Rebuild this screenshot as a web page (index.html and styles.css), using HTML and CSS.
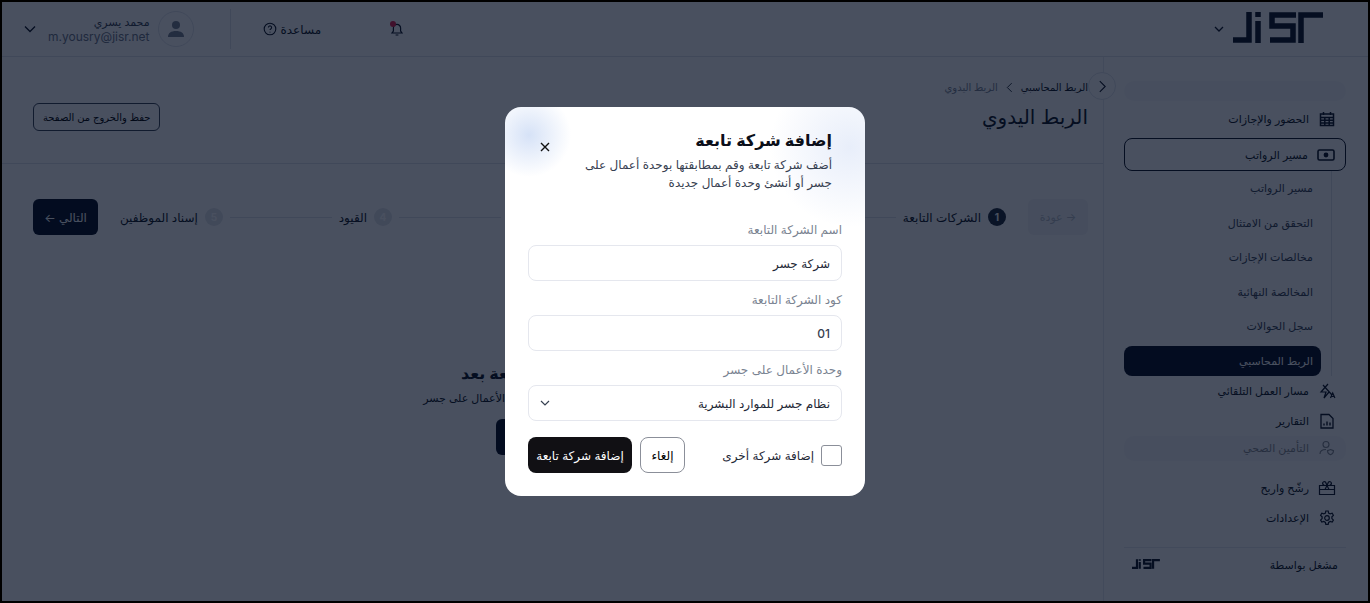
FILE: index.html
```html
<!DOCTYPE html>
<html lang="ar" dir="rtl">
<head>
  <meta charset="UTF-8">
  <title>الربط اليدوي</title>
  <link rel="stylesheet" href="styles.css">
</head>
<body>
  <div class="page">
    <!-- Top bar -->
    <header class="topbar">
      <div class="brand">
        <svg class="logo" viewBox="0 0 100 34" width="100" height="34"><path d="M0 28h16V0M25 9v22M25 0v5" fill="none" stroke="#0b1220" stroke-width="5.5"/><path d="M63 3H39v11h21v14H37M68 31V3h22" fill="none" stroke="#0b1220" stroke-width="5.5"/></svg>
        <svg class="chev" viewBox="0 0 12 12" width="12" height="12"><path d="M2 4l4 4 4-4" fill="none" stroke="#0b1220" stroke-width="1.3"/></svg>
      </div>
      <div class="top-actions">
        <span class="bell"><svg viewBox="0 0 16 16" width="16" height="16"><path d="M3 12h10l-1.4-2V7a3.6 3.6 0 0 0-7.2 0v3zM6.6 14h2.8" fill="none" stroke="#0b1220" stroke-width="1.2"/></svg><i class="bell-dot"></i></span>
        <span class="help">مساعدة <svg viewBox="0 0 14 14" width="14" height="14"><circle cx="7" cy="7" r="5.8" fill="none" stroke="#0b1220" stroke-width="1.1"/><path d="M5.4 5.5a1.6 1.6 0 1 1 2.4 1.4c-.5.3-.8.6-.8 1.2M7 9.8v.6" fill="none" stroke="#0b1220" stroke-width="1.1"/></svg></span>
        <span class="top-sep"></span>
        <div class="user">
          <span class="avatar"><svg viewBox="0 0 20 20" width="20" height="20"><circle cx="10" cy="6" r="4" fill="#77808f"/><path d="M2 18c0-4 3-6 8-6s8 2 8 6z" fill="#77808f"/></svg></span>
          <div class="user-text"><div class="user-name">محمد يسري</div><div class="user-mail">m.yousry@jisr.net</div></div>
          <svg class="user-chev" viewBox="0 0 12 12" width="12" height="12"><path d="M1 3.5l5 5 5-5" fill="none" stroke="#0b1220" stroke-width="1.3"/></svg>
        </div>
      </div>
    </header>

    <div class="layout">
      <!-- Side menu -->
      <aside class="sidebar">
        <div class="nav-faded nav-faded-top"></div>
        <a class="nav-item"><svg viewBox="0 0 16 16" width="16" height="16"><path d="M1.5 3h13v11.5h-13zM1.5 6.5h13M1.5 9.3h13M1.5 12h13M5.8 6.5v8M10.2 6.5v8M4.5 1v3M11.5 1v3" fill="none" stroke="#0b1220" stroke-width="1.5"/></svg>الحضور والإجازات</a>
        <a class="nav-item nav-open"><svg viewBox="0 0 18 14" width="18" height="14"><rect x="1" y="2" width="16" height="10" rx="1.5" fill="none" stroke="#0b1220" stroke-width="1.6"/><circle cx="9" cy="7" r="2.4" fill="#0b1220"/></svg>مسير الرواتب</a>
        <div class="subnav">
          <a class="sub-item">مسير الرواتب</a>
          <a class="sub-item">التحقق من الامتثال</a>
          <a class="sub-item">مخالصات الإجازات</a>
          <a class="sub-item">المخالصة النهائية</a>
          <a class="sub-item">سجل الحوالات</a>
          <a class="sub-item sub-active">الربط المحاسبي</a>
        </div>
        <a class="nav-item"><svg viewBox="0 0 18 16" width="18" height="16"><path d="M10 1L3 9h5l-2 6 5-6M5 2l9 10" fill="none" stroke="#0b1220" stroke-width="1.2"/><path d="M12.5 15l2.2-5 2.2 5M13.3 13.5h2.8" fill="none" stroke="#0b1220" stroke-width="1.2"/></svg>مسار العمل التلقائي</a>
        <a class="nav-item"><svg viewBox="0 0 14 16" width="14" height="16"><path d="M1 1.5h8l4 4v9.5H1z" fill="none" stroke="#0b1220" stroke-width="1.3"/><path d="M4 12.5v-2M7 12.5v-4M10 12.5v-3" stroke="#0b1220" stroke-width="1.4"/></svg>التقارير</a>
        <a class="nav-item nav-faded"><svg viewBox="0 0 16 16" width="16" height="16"><circle cx="7" cy="4.5" r="3" fill="none" stroke="#0b1220" stroke-width="1.1"/><path d="M1 14c0-3 2.500-4.500 6-4.500M11.500 9.500l3 1.200c0 2-1 3.300-3 4-2-.7-3-2-3-4z" fill="none" stroke="#0b1220" stroke-width="1.100"/></svg>التأمين الصحي</a>
        <a class="nav-item nav-gift"><svg viewBox="0 0 18 16" width="18" height="16"><path d="M1.500 5.500h15v9h-15zM1.500 9.500h15M6.500 5.500C3 4 5 .5 7.500 2L9 5.500 10.500 2C13 .5 15 4 11.500 5.500M9 5.500l-2 4M9 5.500l2 4" fill="none" stroke="#0b1220" stroke-width="1.200"/></svg>رشّح واربح</a>
        <a class="nav-item"><svg viewBox="0 0 16 16" width="16" height="16"><circle cx="8" cy="8" r="2.300" fill="none" stroke="#0b1220" stroke-width="1.200"/><path d="M6.800 1h2.400l.4 2 1.600.9 2-.6 1.200 2-1.500 1.500v1.800l1.500 1.500-1.200 2-2-.6-1.600.9-.4 2H6.800l-.4-2-1.600-.9-2 .6-1.200-2 1.500-1.500V6.800L1.600 5.300l1.200-2 2 .6 1.600-.9z" fill="none" stroke="#0b1220" stroke-width="1.200"/></svg>الإعدادات</a>
        <div class="powered">
          <span>مشغل بواسطة</span>
          <svg viewBox="0 0 100 34" width="31" height="11"><path d="M0 28h16V0M25 9v22M25 0v5" fill="none" stroke="#0b1220" stroke-width="7"/><path d="M63 3H39v11h21v14H37M68 31V3h22" fill="none" stroke="#0b1220" stroke-width="7"/></svg>
        </div>
      </aside>

      <!-- Main content -->
      <main class="main">
        <button class="collapse"><svg viewBox="0 0 10 14" width="9" height="13"><path d="M2 1l6 6-6 6" fill="none" stroke="#0b1220" stroke-width="1.200"/></svg></button>
        <div class="page-head">
          <div class="crumbs"><span class="crumb-link">الربط المحاسبي</span><svg viewBox="0 0 8 12" width="7" height="11"><path d="M6.500 1L1.500 6l5 5" fill="none" stroke="#0b1220" stroke-width="1"/></svg><span class="crumb-now">الربط اليدوي</span></div>
          <div class="title-row">
            <h1>الربط اليدوي</h1>
            <button class="btn-outline">حفظ والخروج من الصفحة</button>
          </div>
        </div>
        <div class="steps-row">
          <button class="btn-back">→ عودة</button>
          <div class="steps">
            <div class="step step-on"><span class="num">1</span>الشركات التابعة</div><span class="line"></span>
            <div class="step"><span class="num">2</span>مراكز التكلفة</div><span class="line"></span>
            <div class="step"><span class="num">3</span>الحسابات</div><span class="line"></span>
            <div class="step"><span class="num">4</span>القيود</div><span class="line"></span>
            <div class="step"><span class="num">5</span>إسناد الموظفين</div>
          </div>
          <button class="btn-next">التالي ←</button>
        </div>
        <div class="empty">
          <h2>لا توجد شركات تابعة بعد</h2>
          <p>أضف شركة تابعة وطابق بيانات وحدات الأعمال على جسر</p>
          <button class="btn-add">إضافة شركة تابعة</button>
        </div>
      </main>
    </div>
  </div>

  <div class="overlay"></div>

  <!-- Modal -->
  <section class="modal">
    <div class="modal-head">
      <div>
        <h3>إضافة شركة تابعة</h3>
        <p>أضف شركة تابعة وقم بمطابقتها بوحدة أعمال على جسر أو أنشئ وحدة أعمال جديدة</p>
      </div>
      <svg class="close" viewBox="0 0 10 10" width="10" height="10"><path d="M1 1l8 8M9 1L1 9" stroke="#111" stroke-width="1.400"/></svg>
    </div>
    <label class="field-label">اسم الشركة التابعة</label>
    <div class="field">شركة جسر</div>
    <label class="field-label">كود الشركة التابعة</label>
    <div class="field field-num">01</div>
    <label class="field-label">وحدة الأعمال على جسر</label>
    <div class="field field-select">نظام جسر للموارد البشرية
      <svg viewBox="0 0 10 6" width="10" height="6"><path d="M1 1l4 4 4-4" fill="none" stroke="#374151" stroke-width="1.200"/></svg>
    </div>
    <div class="modal-foot">
      <label class="check"><span class="box"></span>إضافة شركة أخرى</label>
      <div class="foot-btns">
        <button class="btn-cancel">إلغاء</button>
        <button class="btn-primary">إضافة شركة تابعة</button>
      </div>
    </div>
  </section>
</body>
</html>
```

FILE: styles.css
```css
* {
  padding: 0;
  margin: 0;
  box-sizing: border-box;
}

html, body {
  height: 100%;
  overflow: hidden;
}

body {
  font-family: 'Inter', 'DejaVu Sans', sans-serif;
  background: #000;
  color: #0b1220;
  font-size: 11px;
}

button {
  font: inherit;
}

.page {
  height: 599px;
  margin: 2px 2px 2px 2px;
  background: #fff;
  display: flex;
  flex-direction: column;
}

.overlay {
  position: absolute;
  inset: 2px;
  background: rgba(3, 12, 33, 0.72);
}

/* Top bar */
.topbar {
  height: 55px;
  flex: none;
  display: flex;
  justify-content: space-between;
  align-items: center;
  padding: 0 25px 0 22px;
  border-bottom: 1px solid #dfe3ea;
}

.brand {
  display: flex;
  align-items: center;
  gap: 8px;
  padding-right: 10px;
}

.top-actions {
  display: flex;
  align-items: center;
}

.bell {
  position: relative;
  display: flex;
  margin-left: 68px;
}

.bell-dot {
  position: absolute;
  top: 0;
  right: 9px;
  width: 6px;
  height: 6px;
  border-radius: 50%;
  background: #e11d48;
}

.help {
  display: flex;
  align-items: center;
  gap: 4px;
  font-size: 12px;
  margin-left: 32px;
}

.top-sep {
  width: 1px;
  height: 40px;
  background: #dfe3ea;
  margin-left: 36px;
}

.user {
  display: flex;
  align-items: center;
  gap: 8px;
}

.avatar {
  width: 36px;
  height: 36px;
  border-radius: 50%;
  border: 1px solid #dfe3ea;
  display: flex;
  align-items: center;
  justify-content: center;
}

.user-name {
  font-size: 11px;
  color: #374151;
}

.user-mail {
  font-size: 12px;
  color: #6b7486;
}

.user-chev {
  margin-right: 4px;
}

/* Side menu */
.layout {
  flex: 1;
  display: flex;
  min-height: 0;
}

.sidebar {
  width: 265px;
  flex: none;
  padding: 24px 22px 0 20px;
  border-left: 1px solid #e6e9ef;
  display: flex;
  flex-direction: column;
}

.nav-item {
  display: flex;
  align-items: center;
  gap: 9px;
  height: 30px;
  padding-right: 10px;
  font-size: 11px;
}

.nav-item svg {
  width: 18px;
  flex: none;
}

.nav-open {
  height: 33px;
  margin: 4px 0 0;
  border: 1px solid #0b1220;
  border-radius: 8px;
}

.nav-faded {
  height: 25px;
  border-radius: 10px;
  background: #f0f2f5;
  opacity: 0.5;
}

.nav-faded-top {
  height: 20px;
  margin-bottom: 3px;
}

.nav-gift {
  margin-top: 12px;
}

.subnav {
  margin-right: 14px;
  padding: 0 10px 0 0;
  border-right: 1px solid #dfe3ea;
  display: flex;
  flex-direction: column;
}

.sub-item {
  height: 34.500px;
  display: flex;
  align-items: center;
  padding-right: 8px;
  font-size: 11px;
  color: #374151;
}

.sub-active {
  height: 30px;
  margin-top: 2px;
  border-radius: 8px;
  background: #050d1f;
  color: #fff;
}

.powered {
  margin-top: 14px;
  padding: 10px 8px 0;
  border-top: 1px solid #e6e9ef;
  display: flex;
  justify-content: space-between;
  align-items: center;
  font-size: 11px;
}

/* Main */
.main {
  flex: 1;
  position: relative;
  min-width: 0;
}

.collapse {
  position: absolute;
  top: 15px;
  right: -13px;
  width: 28px;
  height: 28px;
  border-radius: 50%;
  border: 1px solid #dfe3ea;
  background: #fff;
  display: flex;
  align-items: center;
  justify-content: center;
}

.page-head {
  height: 107px;
  padding: 24px 15px 0 31px;
  border-bottom: 1px solid #dfe3ea;
}

.crumbs {
  display: flex;
  align-items: center;
  gap: 8px;
  font-size: 10px;
}

.crumb-link {
  color: #0b1220;
}

.crumb-now {
  color: #7a8391;
}

.title-row {
  display: flex;
  justify-content: space-between;
  align-items: center;
  margin-top: 10px;
}

h1 {
  font-size: 20px;
  font-weight: 500;
}

.btn-outline {
  height: 28px;
  padding: 0 9px;
  font-size: 10px;
  background: #fff;
  border: 1px solid #374151;
  border-radius: 6px;
}

.steps-row {
  display: flex;
  align-items: center;
  padding: 35px 15px 0 31px;
}

.btn-back {
  height: 36px;
  width: 60px;
  border: 0;
  border-radius: 6px;
  background: #f3f4f6;
  color: #b6bcc6;
  font-size: 11px;
}

.steps {
  flex: 1;
  display: flex;
  align-items: center;
  padding: 0 22px;
}

.step {
  display: flex;
  align-items: center;
  gap: 7px;
  white-space: nowrap;
  font-size: 12px;
}

.num {
  width: 18px;
  height: 18px;
  border-radius: 50%;
  background: #e2e5ea;
  color: #fff;
  font-size: 10px;
  font-weight: 700;
  display: flex;
  align-items: center;
  justify-content: center;
}

.step-on .num {
  background: #1f2937;
}

.line {
  flex: 1;
  height: 1px;
  margin: 0 7px;
  background: #dfe3ea;
}

.btn-next {
  height: 36px;
  width: 65px;
  border: 0;
  border-radius: 6px;
  background: #050d1f;
  color: #fff;
  font-size: 12px;
}

.empty {
  margin-top: 128px;
  text-align: center;
}

h2 {
  font-size: 16px;
  font-weight: 600;
}

.empty p {
  font-size: 11px;
  margin-top: 8px;
}

.btn-add {
  margin-top: 14px;
  height: 36px;
  padding: 0 16px;
  border: 0;
  border-radius: 6px;
  background: #050d1f;
  color: #fff;
}

/* Modal */
.modal {
  position: absolute;
  left: 505px;
  top: 107px;
  width: 360px;
  height: 389px;
  padding: 23px 23px 0;
  border-radius: 16px;
  background:
    radial-gradient(circle at 24px 28px, #d6e2f7 0, rgba(214, 226, 247, 0) 42px),
    radial-gradient(circle at 345px 40px, #e8eefa 0, rgba(232, 238, 250, 0) 80px),
    #fff;
}

.modal-head {
  display: flex;
  justify-content: space-between;
  padding-right: 10px;
  height: 92px;
}

.modal-head h3 {
  font-size: 16px;
  font-weight: 600;
  color: #0b0f19;
}

.modal-head p {
  width: 270px;
  margin-top: 6px;
  font-size: 12px;
  line-height: 18px;
  color: #374151;
}

.close {
  margin: 12px 0 0 12px;
}

.field-label {
  display: block;
  height: 23px;
  font-size: 12px;
  color: #7a8391;
}

.field {
  height: 36px;
  margin-bottom: 11px;
  padding: 0 11px;
  display: flex;
  align-items: center;
  justify-content: space-between;
  border: 1px solid #e5e7ee;
  border-radius: 8px;
  font-size: 12px;
  color: #1f2937;
}

.field-num {
  color: #374151;
  font-size: 12px;
  font-weight: 500;
}

.modal-foot {
  display: flex;
  justify-content: space-between;
  align-items: center;
  margin-top: 16px;
}

.check {
  display: flex;
  align-items: center;
  gap: 7px;
  font-size: 12px;
  color: #1f2937;
}

.box {
  width: 21px;
  height: 21px;
  border: 1px solid #8b8f99;
  border-radius: 3px;
}

.foot-btns {
  display: flex;
  gap: 8px;
}

.btn-cancel {
  width: 45px;
  height: 36px;
  background: #fff;
  border: 1px solid #8b8f99;
  border-radius: 8px;
  font-size: 12px;
}

.btn-primary {
  width: 104px;
  height: 36px;
  border: 0;
  border-radius: 8px;
  background: #111014;
  color: #fff;
  font-size: 12px;
}
```
